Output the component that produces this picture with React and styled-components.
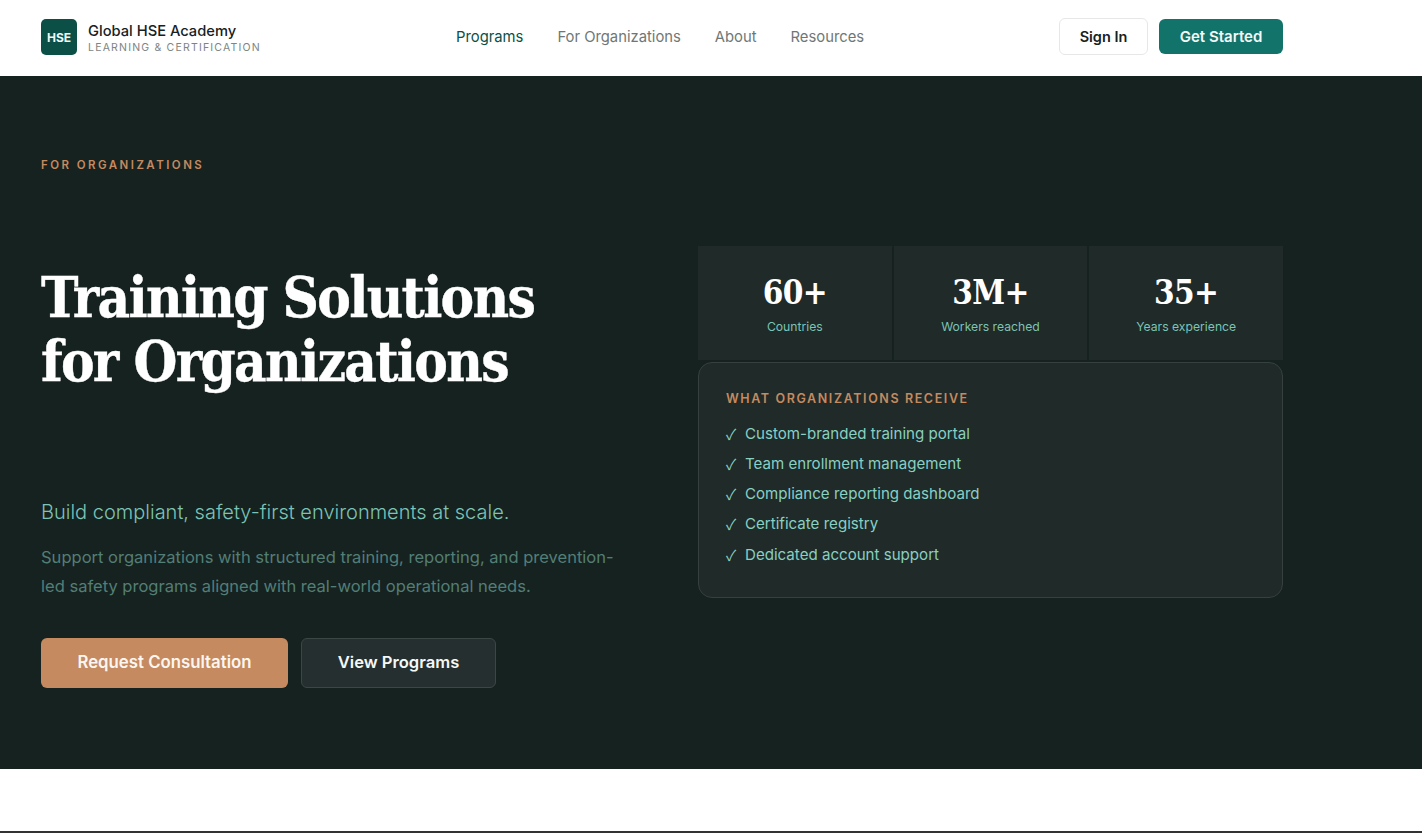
import React from "react";
import styled, { createGlobalStyle } from "styled-components";

const Global = createGlobalStyle`
  html, body { margin: 0; padding: 0; background: #fff; }
  body { font-family: "Inter", "Lato", sans-serif; }
  * { box-sizing: border-box; }
`;
const Page = styled.div`
  min-height: 833px;
  display: flex;
  flex-direction: column;
  background: #fff;
`;
const Nav = styled.header`
  height: 76px;
  padding: 0 139px 2px 41px;
  display: grid;
  grid-template-columns: 415px auto 1fr;
  align-items: center;
  background: #fff;
`;
const Brand = styled.div`
  display: flex;
  align-items: center;
  gap: 11px;
`;
const Logo = styled.div`
  width: 36px;
  height: 36px;
  border-radius: 5px;
  background: #0b4f46;
  color: #f2f7f5;
  display: flex;
  align-items: center;
  justify-content: center;
  font-size: 12px;
  font-weight: 700;
`;
const BrandText = styled.div`
  display: flex;
  flex-direction: column;
  gap: 1px;
  padding-top: 2px;
`;
const BrandName = styled.div`
  font-size: 14.7px;
  line-height: 18px;
  font-weight: 500;
  color: #17211f;
`;
const BrandSub = styled.div`
  font-size: 10.5px;
  line-height: 13px;
  letter-spacing: 1.2px;
  color: #7d8583;
`;
const Links = styled.nav`
  display: flex;
  gap: 34px;
`;
const NavLink = styled.a`
  font-size: 14.8px;
  font-weight: 400;
  color: ${p => (p.$active ? "#0b4f46" : "#6f7775")};
`;
const Actions = styled.div`
  display: flex;
  justify-content: flex-end;
  gap: 11px;
  align-items: center;
  padding-bottom: 2px;
`;
const SignIn = styled.button`
  height: 37px;
  width: 89px;
  padding: 0;
  border: 1px solid #e6e8e8;
  border-radius: 6px;
  background: #fff;
  color: #17211f;
  font: 600 14.5px "Inter", sans-serif;
`;
const GetStarted = styled.button`
  height: 35px;
  width: 124px;
  padding: 0;
  border: 0;
  border-radius: 6px;
  background: #12736a;
  color: #f4f8f7;
  font: 600 15px "Inter", sans-serif;
`;
const Hero = styled.section`
  height: 693px;
  background: #162220;
  padding: 81px 139px 81px 41px;
`;
const Eyebrow = styled.div`
  font-size: 11.5px;
  line-height: 16px;
  font-weight: 600;
  letter-spacing: 2.45px;
  color: #c58a5f;
`;
const Columns = styled.div`
  display: grid;
  grid-template-columns: 585px 585px;
  gap: 72px;
  margin-top: 73px;
`;
const Left = styled.div`
  display: flex;
  flex-direction: column;
`;
const Title = styled.h1`
  margin: 19px 0 0;
  font-family: "DejaVu Serif Condensed", "DejaVu Serif", serif;
  font-stretch: condensed;
  font-weight: 700;
  font-size: 56px;
  line-height: 64px;
  letter-spacing: -1.7px;
  -webkit-text-stroke: 0.4px #fff;
  color: #fff;
`;
const Tagline = styled.p`
  margin: 105px 0 0;
  font-size: 20px;
  line-height: 28px;
  font-weight: 300;
  color: #7cc4b6;
`;
const Lead = styled.p`
  margin: 17px 0 0;
  font-size: 16.55px;
  line-height: 29px;
  color: #527e76;
`;
const Cta = styled.div`
  display: flex;
  gap: 13px;
  margin-top: 37px;
`;
const Primary = styled.button`
  width: 247px;
  height: 50px;
  padding: 0 0 2px;
  border: 0;
  border-radius: 6px;
  background: #c58a5f;
  color: #fbf6f1;
  font: 600 16.8px "Inter", sans-serif;
`;
const Secondary = styled.button`
  width: 195px;
  height: 50px;
  padding: 0 0 2px;
  border: 1px solid #3c4645;
  border-radius: 6px;
  background: #262f2f;
  color: #f5f8f7;
  font: 600 16.6px "Inter", sans-serif;
`;
const Right = styled.div`
  display: flex;
  flex-direction: column;
  gap: 2px;
`;
const Stats = styled.div`
  display: grid;
  grid-template-columns: repeat(3, 1fr);
  gap: 2px;
`;
const Stat = styled.div`
  height: 114px;
  background: #1f2a29;
  display: flex;
  flex-direction: column;
  align-items: center;
  padding-top: 27px;
`;
const StatValue = styled.div`
  font-family: "DejaVu Serif Condensed", "DejaVu Serif", serif;
  font-stretch: condensed;
  font-size: 33px;
  line-height: 40px;
  font-weight: 700;
  letter-spacing: -0.6px;
  color: #fff;
`;
const StatLabel = styled.div`
  margin-top: 5px;
  font-size: 12.2px;
  line-height: 18px;
  color: #7cc4b6;
`;
const Card = styled.div`
  height: 236px;
  background: #1f2a29;
  border: 1px solid #35403f;
  border-radius: 14px;
  padding: 28px 27px;
`;
const CardTitle = styled.div`
  font-size: 12.5px;
  line-height: 16px;
  font-weight: 600;
  letter-spacing: 1.6px;
  color: #c58a5f;
`;
const List = styled.ul`
  list-style: none;
  margin: 11px 0 0;
  padding: 0;
  display: flex;
  flex-direction: column;
`;
const Item = styled.li`
  display: flex;
  align-items: center;
  gap: 9px;
  height: 30.25px;
  font-size: 15.1px;
  color: #88d0c2;
`;
const Check = styled.span`
  font-family: "Noto Sans CJK SC", "DejaVu Sans", sans-serif;
  font-size: 15px;
  width: 10px;
`;
const Spacer = styled.div`
  flex: 1;
`;
const Rule = styled.div`
  height: 2px;
  background: #333;
`;

const stats = [
  ["60+", "Countries"],
  ["3M+", "Workers reached"],
  ["35+", "Years experience"],
];
const items = [
  "Custom-branded training portal",
  "Team enrollment management",
  "Compliance reporting dashboard",
  "Certificate registry",
  "Dedicated account support",
];

export default function App() {
  return (
    <Page>
      <Global />
      <Nav>
        <Brand>
          <Logo>HSE</Logo>
          <BrandText>
            <BrandName>Global HSE Academy</BrandName>
            <BrandSub>LEARNING &amp; CERTIFICATION</BrandSub>
          </BrandText>
        </Brand>
        <Links>
          <NavLink $active>Programs</NavLink>
          <NavLink>For Organizations</NavLink>
          <NavLink>About</NavLink>
          <NavLink>Resources</NavLink>
        </Links>
        <Actions>
          <SignIn>Sign In</SignIn>
          <GetStarted>Get Started</GetStarted>
        </Actions>
      </Nav>
      <Hero>
        <Eyebrow>FOR ORGANIZATIONS</Eyebrow>
        <Columns>
          <Left>
            <Title>Training Solutions<br />for Organizations</Title>
            <Tagline>Build compliant, safety-first environments at scale.</Tagline>
            <Lead>Support organizations with structured training, reporting, and prevention-led safety programs aligned with real-world operational needs.</Lead>
            <Cta>
              <Primary>Request Consultation</Primary>
              <Secondary>View Programs</Secondary>
            </Cta>
          </Left>
          <Right>
            <Stats>
              {stats.map(([v, l]) => (
                <Stat key={l}>
                  <StatValue>{v}</StatValue>
                  <StatLabel>{l}</StatLabel>
                </Stat>
              ))}
            </Stats>
            <Card>
              <CardTitle>WHAT ORGANIZATIONS RECEIVE</CardTitle>
              <List>
                {items.map(t => (
                  <Item key={t}><Check>✓</Check>{t}</Item>
                ))}
              </List>
            </Card>
          </Right>
        </Columns>
      </Hero>
      <Spacer />
      <Rule />
    </Page>
  );
}
